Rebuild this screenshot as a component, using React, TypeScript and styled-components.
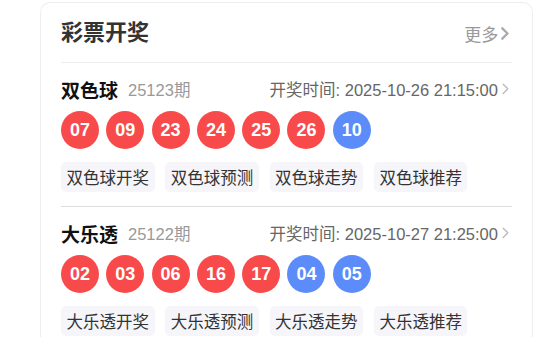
import React from "react";
import styled, { createGlobalStyle } from "styled-components";

const Global = createGlobalStyle`
  html, body { margin: 0; padding: 0; background: #fff; }
  body { font-family: "Liberation Sans", "Noto Sans CJK SC", sans-serif; }
  * { box-sizing: border-box; }
`;

const Page = styled.div`
  padding: 2px 2px 0 40px;
`;

const Card = styled.div`
  border: 1.5px solid #eeeeee;
  border-bottom: none;
  border-radius: 10px 10px 0 0;
  padding: 0 20px;
  background: #fff;
`;

const Head = styled.div`
  display: flex;
  align-items: center;
  justify-content: space-between;
  height: 60px;
  padding-top: 1px;
  border-bottom: 1px solid #eeeeee;
`;

const Title = styled.div`
  font-size: 22px;
  font-weight: 700;
  color: #333;
  line-height: 30px;
`;

const More = styled.a`
  display: flex;
  align-items: center;
  gap: 3px;
  font-size: 17px;
  color: #999;
  text-decoration: none;
  margin-right: 3px;
`;

const Section = styled.div<{ $last?: boolean }>`
  padding: 14px 0 14.5px;
  border-bottom: ${(p) => (p.$last ? "none" : "1px solid #dddddd")};
`;

const RowHead = styled.div`
  display: flex;
  align-items: center;
  height: 24px;
`;

const Name = styled.span`
  font-size: 19px;
  font-weight: 700;
  color: #111;
`;

const Issue = styled.span`
  font-size: 16.5px;
  color: #999;
  margin-left: 10px;
`;

const Time = styled.span`
  margin-left: auto;
  margin-right: 3px;
  display: flex;
  align-items: center;
  gap: 4px;
  font-size: 16.5px;
  color: #666;
`;

const Balls = styled.div`
  display: flex;
  gap: 7.3px;
  margin-top: 10px;
`;

const Ball = styled.div<{ $blue?: boolean }>`
  width: 38px;
  height: 38px;
  border-radius: 50%;
  background: ${(p) => (p.$blue ? "#5b8cf9" : "#f84a4a")};
  color: #fff;
  font-size: 18px;
  font-weight: 700;
  display: flex;
  align-items: center;
  justify-content: center;
`;

const Tags = styled.div`
  display: flex;
  gap: 10.8px;
  margin-top: 13px;
`;

const Tag = styled.a`
  display: flex;
  align-items: center;
  justify-content: center;
  width: 93.5px;
  height: 29.5px;
  border-radius: 5px;
  background: #f6f6fa;
  color: #333;
  font-size: 16.5px;
  text-decoration: none;
`;

const Chevron = ({ size, color, w }: { size: number; color: string; w: number }) => (
  <svg width={size * 0.6} height={size} viewBox="0 0 6 10" fill="none">
    <path d="M1 1l4 4-4 4" stroke={color} strokeWidth={w} strokeLinecap="round" strokeLinejoin="round" />
  </svg>
);

type Lottery = {
  name: string;
  issue: string;
  time: string;
  red: string[];
  blue: string[];
  last?: boolean;
};

const data: Lottery[] = [
  {
    name: "双色球",
    issue: "25123期",
    time: "开奖时间: 2025-10-26 21:15:00",
    red: ["07", "09", "23", "24", "25", "26"],
    blue: ["10"],
  },
  {
    name: "大乐透",
    issue: "25122期",
    time: "开奖时间: 2025-10-27 21:25:00",
    red: ["02", "03", "06", "16", "17"],
    blue: ["04", "05"],
    last: true,
  },
];

export default function App() {
  return (
    <>
      <Global />
      <Page>
        <Card>
          <Head>
            <Title>彩票开奖</Title>
            <More href="#">
              更多
              <Chevron size={13} color="#aaa" w={1.8} />
            </More>
          </Head>
          {data.map((l) => (
            <Section key={l.name} $last={l.last}>
              <RowHead>
                <Name>{l.name}</Name>
                <Issue>{l.issue}</Issue>
                <Time>
                  {l.time}
                  <Chevron size={11.7} color="#bbb" w={1.2} />
                </Time>
              </RowHead>
              <Balls>
                {l.red.map((n, i) => (
                  <Ball key={"r" + i}>{n}</Ball>
                ))}
                {l.blue.map((n, i) => (
                  <Ball key={"b" + i} $blue>
                    {n}
                  </Ball>
                ))}
              </Balls>
              <Tags>
                {["开奖", "预测", "走势", "推荐"].map((t) => (
                  <Tag key={t} href="#">
                    {l.name + t}
                  </Tag>
                ))}
              </Tags>
            </Section>
          ))}
        </Card>
      </Page>
    </>
  );
}
